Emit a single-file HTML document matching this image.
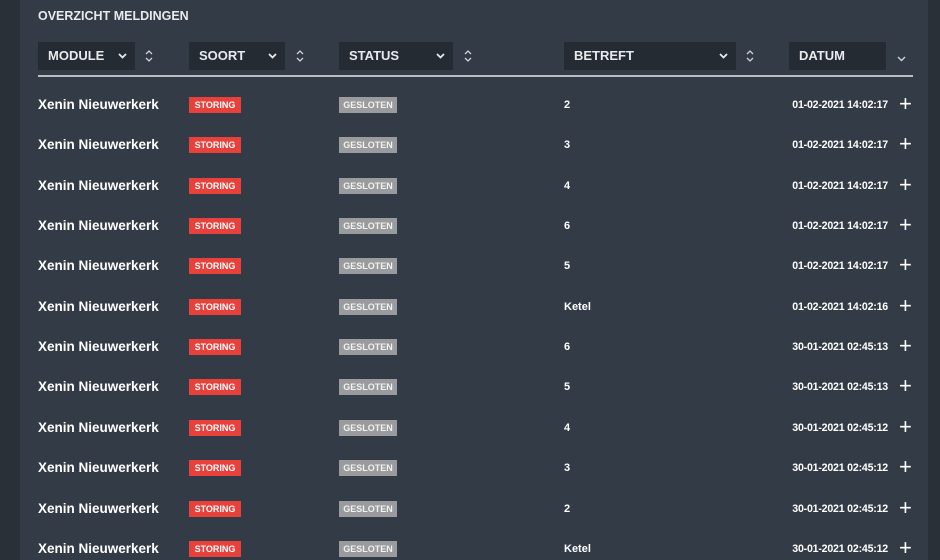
<!DOCTYPE html>
<html><head><style>
body{margin:0;width:940px;height:560px;overflow:hidden;background:#2a3038;font-family:"Liberation Sans",sans-serif;position:relative}
.panel{position:absolute;left:20px;top:0;width:908px;height:560px;background:#333b46}
.t{position:absolute;color:#fff;font-weight:bold}
.title{left:38px;top:9px;font-size:12.5px;color:#e8eaed}
.hb{position:absolute;top:42px;height:28px;background:#252b33;color:#e8eaed;font-weight:bold;font-size:13px;line-height:28px;padding-left:10px;box-sizing:border-box}
.hb svg{position:absolute;right:8px;top:11px}
.ar{position:absolute;top:49px}
.line{position:absolute;left:38px;top:75px;width:875px;height:2px;background:#b9bec5}
.row{position:absolute;left:0;width:940px;height:20px}
.mod{position:absolute;left:38px;top:2px;font-size:13.5px;font-weight:bold;color:#fff}
.b{position:absolute;top:2px;height:16px;line-height:16px;font-size:9px;color:#fff;text-align:center;font-weight:bold}
.st{left:189px;width:52px;background:#e8403a}
.gs{left:339px;width:58px;background:#9a9b9d;color:#f2f2f2}
.bt{position:absolute;left:564px;top:4px;font-size:11px;font-weight:bold;color:#fff}
.dt{position:absolute;right:52px;top:4px;font-size:10.6px;font-weight:bold;color:#fff;letter-spacing:-0.2px}
.pl{position:absolute;left:899px;top:-2px;font-size:22px;color:#fff;line-height:22px}
</style></head><body>
<div class="panel"></div>
<div class="t title">OVERZICHT MELDINGEN</div>
<div class="hb" style="left:38px;width:97px">MODULE<svg width="9" height="6" viewBox="0 0 9 6"><path d="M1 1l3.5 3.5L8 1" stroke="#e8eaed" stroke-width="1.8" fill="none"/></svg></div>
<svg class="ar" style="left:145px" width="8" height="14" viewBox="0 0 8 14"><path d="M1 5l3-3 3 3M1 9l3 3 3-3" stroke="#cfd3d8" stroke-width="1.3" fill="none"/></svg>
<div class="hb" style="left:189px;width:96px">SOORT<svg width="9" height="6" viewBox="0 0 9 6"><path d="M1 1l3.5 3.5L8 1" stroke="#e8eaed" stroke-width="1.8" fill="none"/></svg></div>
<svg class="ar" style="left:296px" width="8" height="14" viewBox="0 0 8 14"><path d="M1 5l3-3 3 3M1 9l3 3 3-3" stroke="#cfd3d8" stroke-width="1.3" fill="none"/></svg>
<div class="hb" style="left:339px;width:114px">STATUS<svg width="9" height="6" viewBox="0 0 9 6"><path d="M1 1l3.5 3.5L8 1" stroke="#e8eaed" stroke-width="1.8" fill="none"/></svg></div>
<svg class="ar" style="left:464px" width="8" height="14" viewBox="0 0 8 14"><path d="M1 5l3-3 3 3M1 9l3 3 3-3" stroke="#cfd3d8" stroke-width="1.3" fill="none"/></svg>
<div class="hb" style="left:564px;width:172px">BETREFT<svg width="9" height="6" viewBox="0 0 9 6"><path d="M1 1l3.5 3.5L8 1" stroke="#e8eaed" stroke-width="1.8" fill="none"/></svg></div>
<svg class="ar" style="left:746px" width="8" height="14" viewBox="0 0 8 14"><path d="M1 5l3-3 3 3M1 9l3 3 3-3" stroke="#cfd3d8" stroke-width="1.3" fill="none"/></svg>
<div class="hb" style="left:789px;width:97px">DATUM</div>
<svg class="ar" style="left:897px;top:56px" width="9" height="6" viewBox="0 0 9 6"><path d="M1 1l3.5 3.5L8 1" stroke="#cfd3d8" stroke-width="1.4" fill="none"/></svg>
<div class="line"></div>
<div class="row" style="top:95px"><div class="mod">Xenin Nieuwerkerk</div><div class="b st">STORING</div><div class="b gs">GESLOTEN</div><div class="bt">2</div><div class="dt">01-02-2021 14:02:17</div><div class="pl">+</div></div>
<div class="row" style="top:135px"><div class="mod">Xenin Nieuwerkerk</div><div class="b st">STORING</div><div class="b gs">GESLOTEN</div><div class="bt">3</div><div class="dt">01-02-2021 14:02:17</div><div class="pl">+</div></div>
<div class="row" style="top:176px"><div class="mod">Xenin Nieuwerkerk</div><div class="b st">STORING</div><div class="b gs">GESLOTEN</div><div class="bt">4</div><div class="dt">01-02-2021 14:02:17</div><div class="pl">+</div></div>
<div class="row" style="top:216px"><div class="mod">Xenin Nieuwerkerk</div><div class="b st">STORING</div><div class="b gs">GESLOTEN</div><div class="bt">6</div><div class="dt">01-02-2021 14:02:17</div><div class="pl">+</div></div>
<div class="row" style="top:256px"><div class="mod">Xenin Nieuwerkerk</div><div class="b st">STORING</div><div class="b gs">GESLOTEN</div><div class="bt">5</div><div class="dt">01-02-2021 14:02:17</div><div class="pl">+</div></div>
<div class="row" style="top:297px"><div class="mod">Xenin Nieuwerkerk</div><div class="b st">STORING</div><div class="b gs">GESLOTEN</div><div class="bt">Ketel</div><div class="dt">01-02-2021 14:02:16</div><div class="pl">+</div></div>
<div class="row" style="top:337px"><div class="mod">Xenin Nieuwerkerk</div><div class="b st">STORING</div><div class="b gs">GESLOTEN</div><div class="bt">6</div><div class="dt">30-01-2021 02:45:13</div><div class="pl">+</div></div>
<div class="row" style="top:377px"><div class="mod">Xenin Nieuwerkerk</div><div class="b st">STORING</div><div class="b gs">GESLOTEN</div><div class="bt">5</div><div class="dt">30-01-2021 02:45:13</div><div class="pl">+</div></div>
<div class="row" style="top:418px"><div class="mod">Xenin Nieuwerkerk</div><div class="b st">STORING</div><div class="b gs">GESLOTEN</div><div class="bt">4</div><div class="dt">30-01-2021 02:45:12</div><div class="pl">+</div></div>
<div class="row" style="top:458px"><div class="mod">Xenin Nieuwerkerk</div><div class="b st">STORING</div><div class="b gs">GESLOTEN</div><div class="bt">3</div><div class="dt">30-01-2021 02:45:12</div><div class="pl">+</div></div>
<div class="row" style="top:499px"><div class="mod">Xenin Nieuwerkerk</div><div class="b st">STORING</div><div class="b gs">GESLOTEN</div><div class="bt">2</div><div class="dt">30-01-2021 02:45:12</div><div class="pl">+</div></div>
<div class="row" style="top:539px"><div class="mod">Xenin Nieuwerkerk</div><div class="b st">STORING</div><div class="b gs">GESLOTEN</div><div class="bt">Ketel</div><div class="dt">30-01-2021 02:45:12</div><div class="pl">+</div></div>
</body></html>
